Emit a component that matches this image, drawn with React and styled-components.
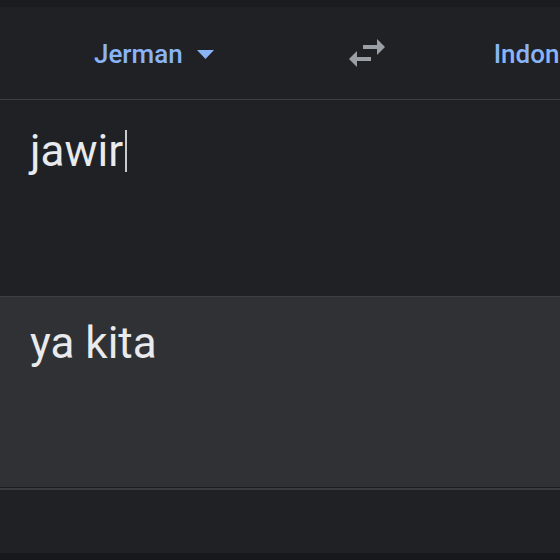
import React from "react";
import styled, { createGlobalStyle } from "styled-components";

const Global = createGlobalStyle`
  html, body { margin: 0; padding: 0; background: #202124; }
  body { font-family: Roboto, "Noto Sans", sans-serif; overflow: hidden; }
`;

const Page = styled.div`
  width: 560px;
  height: 560px;
  display: flex;
  flex-direction: column;
  background: #202124;
  overflow: hidden;
`;

const TopStrip = styled.div`
  height: 7px;
  flex: none;
  background: #1b1c1f;
`;

const Header = styled.div`
  height: 92px;
  flex: none;
  display: flex;
  align-items: center;
  padding-left: 94px;
  border-bottom: 1px solid #3c4043;
  white-space: nowrap;
  overflow: hidden;
`;

const LangButton = styled.div`
  display: flex;
  align-items: center;
  gap: 14px;
  color: #8ab4f8;
  font-family: Roboto, sans-serif;
  font-weight: 500;
  font-size: 26px;
  margin-left: ${(p) => p.$ml || 0}px;
  flex: none;
  padding-top: 2px;
`;

const SwapWrap = styled.div`
  margin-left: ${(p) => p.$ml}px;
  width: 48px;
  height: 48px;
  flex: none;
  display: flex;
`;

const InputArea = styled.div`
  height: 196px;
  flex: none;
  position: relative;
`;

const TextLine = styled.div`
  position: absolute;
  left: 30px;
  top: ${(p) => p.$top}px;
  display: flex;
  align-items: center;
  color: #e8eaed;
  font-family: Roboto, sans-serif;
  font-size: 44px;
  line-height: 52px;
`;

const Caret = styled.span`
  display: inline-block;
  width: 2px;
  height: 42px;
  background: #c8cacd;
  margin-left: 2px;
`;

const OutputArea = styled.div`
  height: 190px;
  flex: none;
  background: #303134;
  border-top: 1px solid #3c4043;
  border-bottom: 1px solid #1c1d20;
  box-shadow: 0 2px 0 #3a3b3f;
  position: relative;
`;

const Footer = styled.div`
  flex: 1;
  margin-top: 2px;
  background: #202124;
`;

const BottomStrip = styled.div`
  height: 7px;
  flex: none;
  background: #17181a;
`;

function SwapIcon() {
  return (
    <svg width="48" height="48" viewBox="0 0 24 24" fill="#9aa0a6">
      <path d="M6.99 11L3 15l3.99 4v-3H14v-2H6.99v-3zM21 9l-3.99-4v3H10v2h7.01v3L21 9z" />
    </svg>
  );
}

function DropArrow() {
  return (
    <svg width="17" height="9" viewBox="0 0 17 9">
      <path d="M0 0h17L8.5 9z" fill="#8ab4f8" />
    </svg>
  );
}

export default function App() {
  return (
    <Page>
      <Global />
      <TopStrip />
      <Header>
        <LangButton>
          Jerman
          <DropArrow />
        </LangButton>
        <SwapWrap $ml={129}>
          <SwapIcon />
        </SwapWrap>
        <LangButton $ml={103}>Indonesia</LangButton>
      </Header>
      <InputArea>
        <TextLine $top={25}>
          jawir
          <Caret />
        </TextLine>
      </InputArea>
      <OutputArea>
        <TextLine $top={20}>ya kita</TextLine>
      </OutputArea>
      <Footer />
      <BottomStrip />
    </Page>
  );
}
